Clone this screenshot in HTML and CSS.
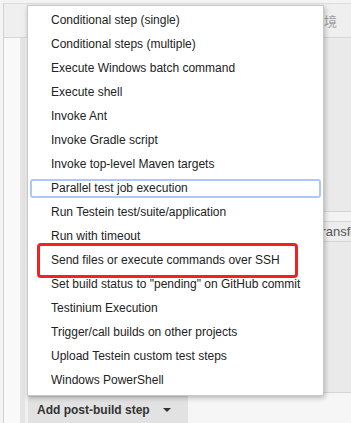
FILE: index.html
```html
<!DOCTYPE html>
<html>
<head>
    <title>Post-build steps</title>
    <link rel="stylesheet" href="styles.css">
</head>
<body>
    <div class="frame">
        <div class="tabs">
            <span class="tab-label">境</span>
        </div>
        <div class="work">
            <div class="gutter"></div>
            <div class="rail"></div>
            <div class="rail-edge"></div>
            <div class="main">
                <div class="section upper"></div>
                <div class="section strip"></div>
                <div class="section heading"><span>Transfers</span></div>
                <div class="section lower"></div>
                <div class="footer">
                    <button class="add-btn">Add post-build step <span class="caret"></span></button>
                </div>
            </div>
        </div>
    </div>

    <ul class="menu">
        <li>Conditional step (single)</li>
        <li>Conditional steps (multiple)</li>
        <li>Execute Windows batch command</li>
        <li>Execute shell</li>
        <li>Invoke Ant</li>
        <li>Invoke Gradle script</li>
        <li>Invoke top-level Maven targets</li>
        <li class="focus">Parallel test job execution</li>
        <li>Run Testein test/suite/application</li>
        <li>Run with timeout</li>
        <li>Send files or execute commands over SSH</li>
        <li>Set build status to "pending" on GitHub commit</li>
        <li>Testinium Execution</li>
        <li>Trigger/call builds on other projects</li>
        <li>Upload Testein custom test steps</li>
        <li>Windows PowerShell</li>
    </ul>

    <div class="highlight"></div>
</body>
</html>
```

FILE: styles.css
```css
body {
    margin: 0;
    width: 351px;
    height: 423px;
    overflow: hidden;
    position: relative;
    background: #f4f4f4;
    font-family: "Liberation Sans", Arial, sans-serif;
}

.frame {
    margin: 3px 0 0 3px;
    border-left: 1px solid #d2d2d2;
    border-top: 1px solid #dedede;
    height: 419px;
    display: grid;
    grid-template-columns: minmax(0, 1fr);
    grid-template-rows: 34px 1fr;
}

.tabs {
    background: #efefef;
    border-bottom: 1px solid #d6d6d6;
    display: flex;
    justify-content: flex-end;
    align-items: center;
    padding-right: 14px;
}
.tab-label {
    color: #a0a0a0;
    font-size: 13px;
    font-family: "Noto Sans CJK SC", sans-serif;
}

.work {
    display: grid;
    grid-template-columns: 16px 5px 3px minmax(0, 1fr);
    min-height: 0;
}
.gutter { background: #f9f9f9; }
.rail { background: #e4e4e4; }
.rail-edge { background: #f1f1f1; }

.main {
    display: flex;
    flex-direction: column;
    min-width: 0;
}
.section { background: #eaeaea; }
.upper { height: 173px; border-bottom: 1px solid #d3d3d3; }
.strip { height: 9px; background: #f3f3f3; border-bottom: 1px solid #d6d6d6; }
.heading {
    height: 19px;
    background: #ededed;
    border-bottom: 1px solid #d6d6d6;
    font-size: 13px;
    line-height: 19px;
    color: #555;
    padding-left: 286px;
    white-space: nowrap;
    overflow: hidden;
}
.lower { height: 150px; border-bottom: 1px solid #d6d6d6; }

.footer {
    flex: 1;
    background: #f6f6f6;
    padding-top: 3px;
}
.add-btn {
    display: flex;
    align-items: center;
    gap: 13px;
    height: 27px;
    padding: 0 17px 0 9px;
    border: none;
    border-top: 1px solid #d0d0d0;
    background: #e2e2e2;
    color: #333;
    font-family: "Liberation Sans", Arial, sans-serif;
    font-size: 12px;
    font-weight: bold;
}
.caret {
    width: 0;
    height: 0;
    border-left: 4px solid transparent;
    border-right: 4px solid transparent;
    border-top: 4px solid #333;
}

.menu {
    position: absolute;
    left: 27px;
    top: 5px;
    width: 291px;
    margin: 0;
    padding: 2px 2px 3px;
    list-style: none;
    display: flex;
    flex-direction: column;
    background: #fff;
    border: 1px solid #c8c8c8;
    box-shadow: 1px 2px 5px rgba(0, 0, 0, 0.25);
}
.menu li {
    height: 19px;
    margin: 3px 0 2px;
    padding-left: 21px;
    font-size: 12px;
    line-height: 19px;
    color: #222;
    white-space: nowrap;
}
.menu li.focus {
    outline: 2px solid #acc9f6;
    outline-offset: -2px;
    border-radius: 3px;
}

.highlight {
    position: absolute;
    left: 37px;
    top: 243px;
    width: 261px;
    height: 35px;
    box-sizing: border-box;
    border: 3px solid #f32121;
    border-radius: 4px;
}
```
